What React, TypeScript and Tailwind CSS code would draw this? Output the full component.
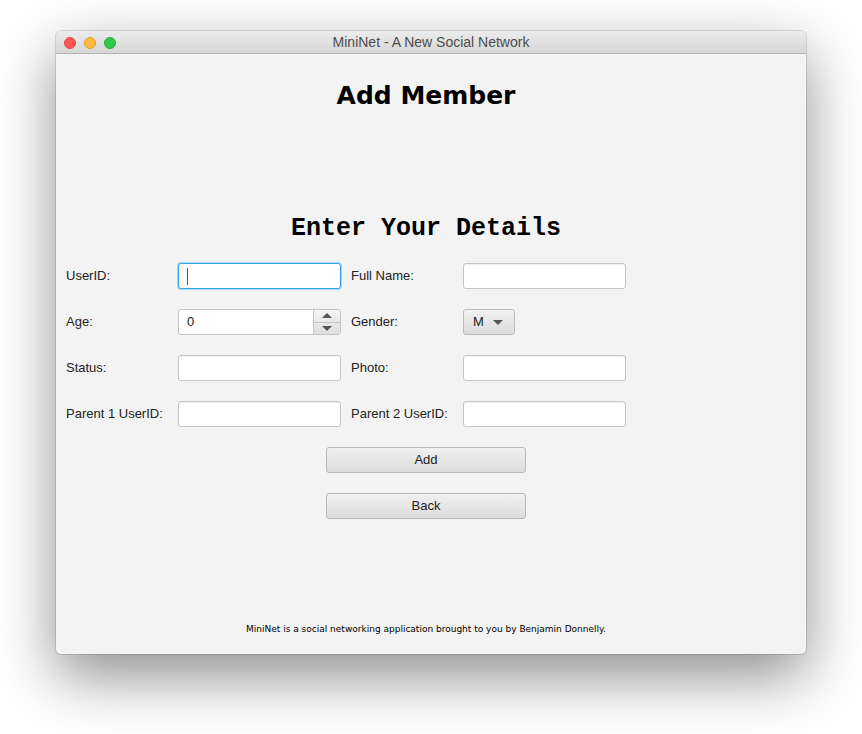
import { useState } from "react";

const rows = [
  { l: "UserID:", r: "Full Name:", left: "focus", right: "text" },
  { l: "Age:", r: "Gender:", left: "spinner", right: "combo" },
  { l: "Status:", r: "Photo:", left: "text", right: "text" },
  { l: "Parent 1 UserID:", r: "Parent 2 UserID:", left: "text", right: "text" },
];

function Field({ kind }: { kind: string }) {
  if (kind === "focus") {
    return (
      <div className="h-[26px] w-[163px] rounded-[3px] border border-[#2fa4e7] bg-white shadow-[0_0_0_1px_rgba(60,160,230,0.35)] flex items-center pl-[8px]">
        <div className="h-[17px] w-px bg-[#555]" />
      </div>
    );
  }
  if (kind === "spinner") {
    return (
      <div className="h-[26px] w-[163px] rounded-[3px] border border-[#c5c5c5] bg-white flex">
        <div className="flex-1 flex items-center pl-[8px] text-[13px] text-[#222]">0</div>
        <div className="w-[27px] flex flex-col border-l border-[#c5c5c5] bg-gradient-to-b from-[#f4f4f4] to-[#dedede] rounded-r-[3px]">
          <div className="flex-1 flex items-center justify-center border-b border-[#c5c5c5]">
            <div className="w-0 h-0 border-l-[5px] border-r-[5px] border-b-[5px] border-l-transparent border-r-transparent border-b-[#555]" />
          </div>
          <div className="flex-1 flex items-center justify-center">
            <div className="w-0 h-0 border-l-[5px] border-r-[5px] border-t-[5px] border-l-transparent border-r-transparent border-t-[#555]" />
          </div>
        </div>
      </div>
    );
  }
  if (kind === "combo") {
    return (
      <div className="h-[26px] w-[52px] rounded-[3px] border border-[#bdbdbd] bg-gradient-to-b from-[#f1f1f1] to-[#dcdcdc] flex items-center pl-[9px] gap-[9px] text-[13px] text-[#222]">
        <span>M</span>
        <div className="w-0 h-0 border-l-[5px] border-r-[5px] border-t-[5px] border-l-transparent border-r-transparent border-t-[#555]" />
      </div>
    );
  }
  return (
    <div className="h-[26px] w-[163px] rounded-[3px] border border-[#c5c5c5] bg-white shadow-[inset_0_1px_1px_rgba(0,0,0,0.06)]" />
  );
}

function Btn({ label }: { label: string }) {
  return (
    <div className="h-[26px] w-[200px] rounded-[3px] border border-[#b9b9b9] bg-gradient-to-b from-[#f0f0f0] to-[#dcdcdc] flex items-center justify-center text-[13px] text-[#222]">
      {label}
    </div>
  );
}

export default function App() {
  const [title] = useState("MiniNet - A New Social Network");
  return (
    <div className="w-[862px] h-[734px] bg-white pt-[31px] pl-[56px] font-['Liberation_Sans',Arial,sans-serif]">
      <div className="w-[750px] h-[623px] rounded-[5px] overflow-hidden flex flex-col bg-[#f3f3f3] shadow-[0_22px_60px_rgba(0,0,0,0.45),0_0_0_1px_rgba(0,0,0,0.12)]">
        {/* Title bar */}
        <div className="relative h-[23px] shrink-0 bg-gradient-to-b from-[#ececec] to-[#d6d6d6] border-b border-[#b4b4b4] flex items-center justify-center">
          <div className="absolute left-[8px] top-[6px] flex gap-[8px]">
            <div className="h-[12px] w-[12px] rounded-full bg-[#fc5753] border border-[#df4744]" />
            <div className="h-[12px] w-[12px] rounded-full bg-[#fdbc40] border border-[#de9f34]" />
            <div className="h-[12px] w-[12px] rounded-full bg-[#33c748] border border-[#27aa35]" />
          </div>
          <span className="text-[14px] text-[#4d4d4d]">{title}</span>
        </div>

        {/* Content */}
        <div className="flex-1 flex flex-col pr-[10px]">
          <h1 className="mt-[26px] text-center font-['DejaVu_Sans',Verdana,sans-serif] font-bold text-[25px] leading-[32px] text-black">
            Add Member
          </h1>
          <h2 className="mt-[102px] text-center font-['Liberation_Mono','Courier_New',monospace] font-bold text-[25px] leading-[30px] text-black">
            Enter Your Details
          </h2>

          <div className="mt-[19px] pl-[10px] flex flex-col gap-[20px]">
            {rows.map((r) => (
              <div key={r.l} className="flex items-center">
                <div className="w-[112px] text-[13px] text-[#222]">{r.l}</div>
                <Field kind={r.left} />
                <div className="ml-[10px] w-[112px] text-[13px] text-[#222]">{r.r}</div>
                <Field kind={r.right} />
              </div>
            ))}
          </div>

          <div className="mt-[20px] flex flex-col items-center gap-[20px]">
            <Btn label="Add" />
            <Btn label="Back" />
          </div>

          <div className="flex-1" />
          <p className="pb-[18px] text-center font-['DejaVu_Sans',Verdana,sans-serif] text-[9px] text-black">
            MiniNet is a social networking application brought to you by Benjamin Donnelly.
          </p>
        </div>
      </div>
    </div>
  );
}
